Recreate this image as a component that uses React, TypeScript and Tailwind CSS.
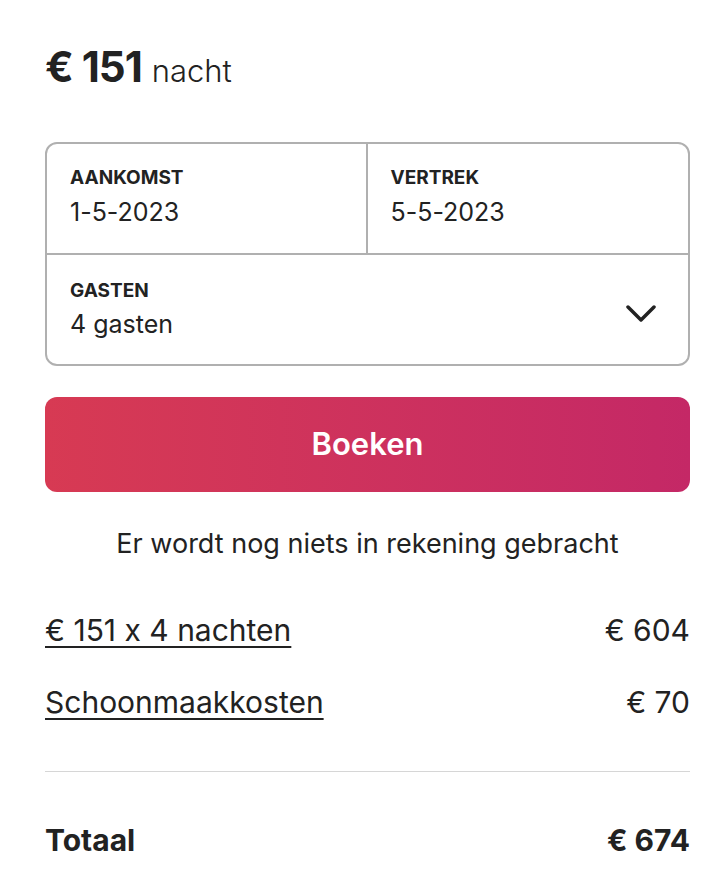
const rows = [
  { label: "€ 151 x 4 nachten", amount: "€ 604" },
  { label: "Schoonmaakkosten", amount: "€ 70" },
];

function Chevron() {
  return (
    <svg width="30" height="18" viewBox="0 0 30 18" fill="none" className="mt-[9px]">
      <path d="M2 2 L15 15 L28 2" stroke="#222222" strokeWidth="3.5" strokeLinecap="round" strokeLinejoin="round" />
    </svg>
  );
}

export default function App() {
  return (
    <div className="h-[894px] w-[726px] overflow-hidden bg-white pl-[45px] pr-[36px] font-['Inter',sans-serif] text-[#222222] [font-feature-settings:'calt'_0]">
      <div className="flex items-baseline gap-[10px] pt-[43px] leading-[48px]">
        <span className="text-[42px] font-bold tracking-[-1px]">€ 151</span>
        <span className="text-[31px] font-light">nacht</span>
      </div>

      <div className="mt-[47px] rounded-[12px] border-2 border-[#b0b0b0]">
        <div className="grid h-[111px] grid-cols-2 border-b-2 border-[#b0b0b0]">
          <div className="border-r-2 border-[#b0b0b0] px-[23px] pt-[22px]">
            <div className="text-[19px] font-bold leading-[24px]">AANKOMST</div>
            <div className="mt-[6px] text-[25px] leading-[32px]">1-5-2023</div>
          </div>
          <div className="px-[23px] pt-[22px]">
            <div className="text-[19px] font-bold leading-[24px]">VERTREK</div>
            <div className="mt-[6px] text-[25px] leading-[32px]">5-5-2023</div>
          </div>
        </div>
        <div className="flex h-[109px] items-center justify-between pl-[23px] pr-[32px]">
          <div className="self-start pt-[24px]">
            <div className="text-[19px] font-bold leading-[24px]">GASTEN</div>
            <div className="mt-[5px] text-[25px] leading-[32px]">4 gasten</div>
          </div>
          <Chevron />
        </div>
      </div>

      <button className="mt-[31px] flex h-[95px] w-full items-center justify-center rounded-[12px] bg-gradient-to-r from-[#d73a53] to-[#c42866] text-[31px] font-semibold text-white">
        Boeken
      </button>

      <p className="mt-[36px] text-center text-[27px] leading-[32px]">
        Er wordt nog niets in rekening gebracht
      </p>

      <div className="mt-[52px] flex flex-col gap-[36px]">
        {rows.map((r) => (
          <div key={r.label} className="flex items-center justify-between text-[30px] leading-[36px]">
            <span className="underline decoration-[1.5px] underline-offset-[5px]">{r.label}</span>
            <span>{r.amount}</span>
          </div>
        ))}
      </div>

      <div className="mt-[51px] border-t-[1.5px] border-[#d6d6d6]" />

      <div className="mt-[50px] flex items-center justify-between text-[30px] font-bold leading-[36px]">
        <span>Totaal</span>
        <span>€ 674</span>
      </div>
    </div>
  );
}
